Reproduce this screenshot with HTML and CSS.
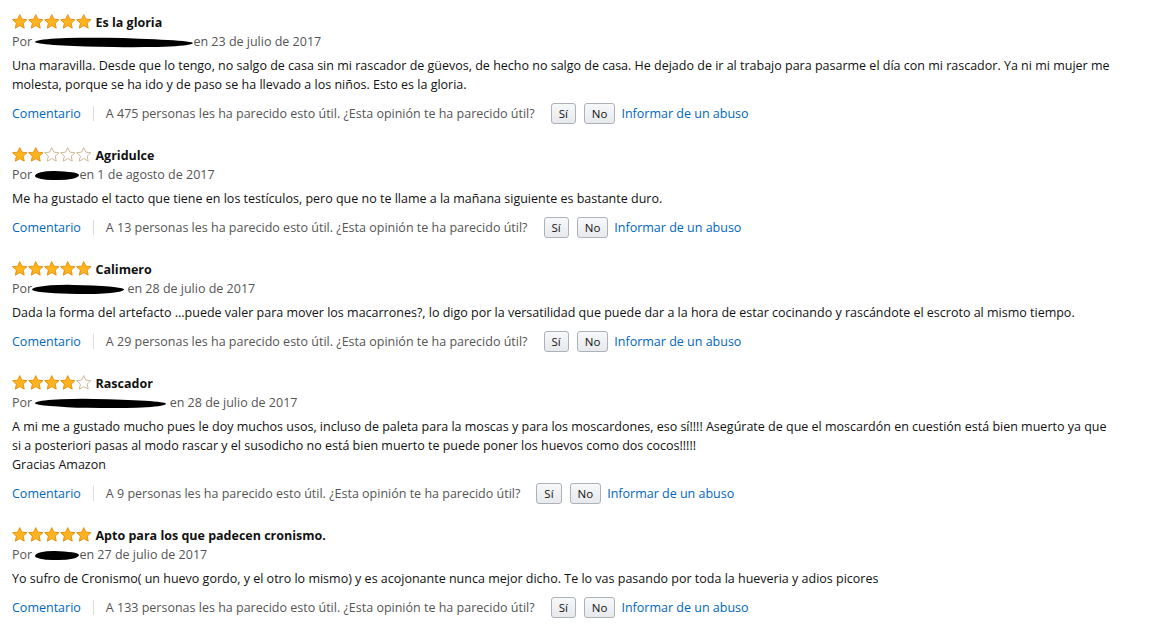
FILE: index.html
```html
<!DOCTYPE html>
<html lang="es">
<head>
<meta charset="utf-8">
<title>Opiniones</title>
<link rel="stylesheet" href="styles.css">
</head>
<body>
<svg width="0" height="0" class="defs">
  <defs>
    <symbol id="star-full" viewBox="0 0 16 16">
      <polygon points="8,0.6 10.2,5.3 15.4,5.9 11.5,9.4 12.6,14.6 8,12 3.4,14.6 4.5,9.4 0.6,5.9 5.8,5.3" fill="#ffb31c" stroke="#e08a0e" stroke-width="0.9" stroke-linejoin="round"/>
    </symbol>
    <symbol id="star-empty" viewBox="0 0 16 16">
      <polygon points="8,0.6 10.2,5.3 15.4,5.9 11.5,9.4 12.6,14.6 8,12 3.4,14.6 4.5,9.4 0.6,5.9 5.8,5.3" fill="#fff" stroke="#c8b08a" stroke-width="0.9" stroke-linejoin="round"/>
    </symbol>
  </defs>
</svg>

<div class="reviews">
  <div class="review">
    <div class="head">
      <span class="stars"><svg><use href="#star-full"/></svg><svg><use href="#star-full"/></svg><svg><use href="#star-full"/></svg><svg><use href="#star-full"/></svg><svg><use href="#star-full"/></svg></span>
      <span class="title">Es la gloria</span>
    </div>
    <div class="byline">Por <span class="redact r1"></span>en 23 de julio de 2017</div>
    <p class="body">Una maravilla. Desde que lo tengo, no salgo de casa sin mi rascador de güevos, de hecho no salgo de casa. He dejado de ir al trabajo para pasarme el día con mi rascador. Ya ni mi mujer me molesta, porque se ha ido y de paso se ha llevado a los niños. Esto es la gloria.</p>
    <div class="actions">
      <a class="link">Comentario</a>
      <span class="sep"></span>
      <span class="helpful">A 475 personas les ha parecido esto útil. ¿Esta opinión te ha parecido útil?</span>
      <span class="btn">Sí</span><span class="btn">No</span>
      <a class="link abuse">Informar de un abuso</a>
    </div>
  </div>

  <div class="review">
    <div class="head">
      <span class="stars"><svg><use href="#star-full"/></svg><svg><use href="#star-full"/></svg><svg><use href="#star-empty"/></svg><svg><use href="#star-empty"/></svg><svg><use href="#star-empty"/></svg></span>
      <span class="title">Agridulce</span>
    </div>
    <div class="byline">Por <span class="redact r2"></span>en 1 de agosto de 2017</div>
    <p class="body">Me ha gustado el tacto que tiene en los testículos, pero que no te llame a la mañana siguiente es bastante duro.</p>
    <div class="actions">
      <a class="link">Comentario</a>
      <span class="sep"></span>
      <span class="helpful">A 13 personas les ha parecido esto útil. ¿Esta opinión te ha parecido útil?</span>
      <span class="btn">Sí</span><span class="btn">No</span>
      <a class="link abuse">Informar de un abuso</a>
    </div>
  </div>

  <div class="review">
    <div class="head">
      <span class="stars"><svg><use href="#star-full"/></svg><svg><use href="#star-full"/></svg><svg><use href="#star-full"/></svg><svg><use href="#star-full"/></svg><svg><use href="#star-full"/></svg></span>
      <span class="title">Calimero</span>
    </div>
    <div class="byline">Por<span class="redact r3"></span> en 28 de julio de 2017</div>
    <p class="body">Dada la forma del artefacto ...puede valer para mover los macarrones?, lo digo por la versatilidad que puede dar a la hora de estar cocinando y rascándote el escroto al mismo tiempo.</p>
    <div class="actions">
      <a class="link">Comentario</a>
      <span class="sep"></span>
      <span class="helpful">A 29 personas les ha parecido esto útil. ¿Esta opinión te ha parecido útil?</span>
      <span class="btn">Sí</span><span class="btn">No</span>
      <a class="link abuse">Informar de un abuso</a>
    </div>
  </div>

  <div class="review">
    <div class="head">
      <span class="stars"><svg><use href="#star-full"/></svg><svg><use href="#star-full"/></svg><svg><use href="#star-full"/></svg><svg><use href="#star-full"/></svg><svg><use href="#star-empty"/></svg></span>
      <span class="title">Rascador</span>
    </div>
    <div class="byline">Por <span class="redact r4"></span> en 28 de julio de 2017</div>
    <p class="body">A mi me a gustado mucho pues le doy muchos usos, incluso de paleta para la moscas y para los moscardones, eso sí!!!! Asegúrate de que el moscardón en cuestión está bien muerto ya que si a posteriori pasas al modo rascar y el susodicho no está bien muerto te puede poner los huevos como dos cocos!!!!!<br>Gracias Amazon</p>
    <div class="actions">
      <a class="link">Comentario</a>
      <span class="sep"></span>
      <span class="helpful">A 9 personas les ha parecido esto útil. ¿Esta opinión te ha parecido útil?</span>
      <span class="btn">Sí</span><span class="btn">No</span>
      <a class="link abuse">Informar de un abuso</a>
    </div>
  </div>

  <div class="review">
    <div class="head">
      <span class="stars"><svg><use href="#star-full"/></svg><svg><use href="#star-full"/></svg><svg><use href="#star-full"/></svg><svg><use href="#star-full"/></svg><svg><use href="#star-full"/></svg></span>
      <span class="title">Apto para los que padecen cronismo.</span>
    </div>
    <div class="byline">Por <span class="redact r2"></span>en 27 de julio de 2017</div>
    <p class="body">Yo sufro de Cronismo( un huevo gordo, y el otro lo mismo) y es acojonante nunca mejor dicho. Te lo vas pasando por toda la hueveria y adios picores</p>
    <div class="actions">
      <a class="link">Comentario</a>
      <span class="sep"></span>
      <span class="helpful">A 133 personas les ha parecido esto útil. ¿Esta opinión te ha parecido útil?</span>
      <span class="btn">Sí</span><span class="btn">No</span>
      <a class="link abuse">Informar de un abuso</a>
    </div>
  </div>
</div>
</body>
</html>
```

FILE: styles.css
```css
html, body {
  margin: 0;
  padding: 0;
  background: #fff;
}
body {
  font-family: "Open Sans", "Noto Sans", sans-serif;
  font-size: 12.5px;
  color: #111;
}
.defs {
  position: absolute;
  width: 0;
  height: 0;
}
.reviews {
  width: 1104px;
  padding: 12px 0 0 12px;
}
.review {
  margin-bottom: 20px;
}
.head {
  display: flex;
  align-items: center;
  height: 20px;
  gap: 4px;
}
.stars {
  display: flex;
  gap: 0.5px;
}
.stars svg {
  width: 15.5px;
  height: 15.5px;
  display: block;
}
.title {
  font-weight: 700;
  color: #111;
}
.byline {
  color: #555;
  line-height: 19px;
}
.redact {
  display: inline-block;
  height: 9px;
  background: #000;
  border-radius: 45% 55% 50% 40% / 60% 40% 60% 40%;
  vertical-align: -1px;
  transform: rotate(1deg);
}
.r1 { width: 158px; }
.r2 { width: 44px; }
.r3 { width: 92px; }
.r4 { width: 131px; }
.body {
  margin: 5px 0 0;
  line-height: 19px;
}
.actions {
  display: flex;
  align-items: center;
  height: 24px;
  margin-top: 7px;
  color: #555;
}
.link {
  color: #0066c0;
  cursor: pointer;
}
.sep {
  width: 1px;
  height: 15px;
  background: #ddd;
  margin: 0 12px;
}
.helpful {
  margin-right: 16px;
}
.btn {
  display: inline-flex;
  align-items: center;
  height: 19px;
  padding: 0 7px;
  border: 1px solid #adb1b8;
  border-radius: 3px;
  background: linear-gradient(#f7f8fa, #e7e9ec);
  color: #111;
  font-size: 11.5px;
  margin-right: 8px;
}
.abuse {
  margin-left: -2px;
}
```
